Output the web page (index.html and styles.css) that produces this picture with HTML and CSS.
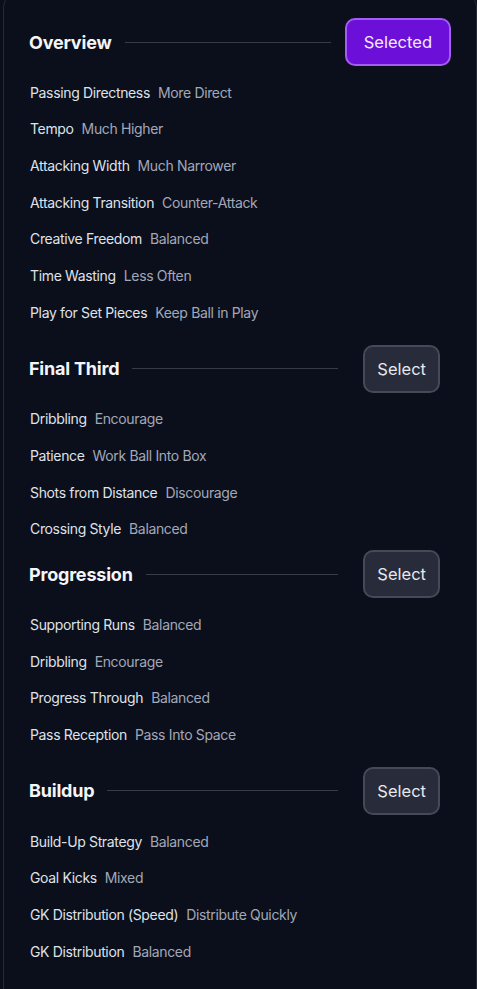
FILE: index.html
```html
<!DOCTYPE html>
<html lang="en">
    <head>
        <meta charset="UTF-8"/>
        <title>Tactics</title>
        <link rel="stylesheet" href="styles.css">
    </head>
    <body>
        <div class="card">
          <section class="group">
            <div class="group-head">
              <h2>Overview</h2>
              <span class="rule"></span>
              <button class="pick selected">Selected</button>
            </div>
            <ul class="settings">
              <li><span class="name">Passing Directness</span><span class="value">More Direct</span></li>
              <li><span class="name">Tempo</span><span class="value">Much Higher</span></li>
              <li><span class="name">Attacking Width</span><span class="value">Much Narrower</span></li>
              <li><span class="name">Attacking Transition</span><span class="value">Counter-Attack</span></li>
              <li><span class="name">Creative Freedom</span><span class="value">Balanced</span></li>
              <li><span class="name">Time Wasting</span><span class="value">Less Often</span></li>
              <li><span class="name">Play for Set Pieces</span><span class="value">Keep Ball in Play</span></li>
            </ul>
          </section>
          <section class="group">
            <div class="group-head">
              <h2>Final Third</h2>
              <span class="rule"></span>
              <button class="pick">Select</button>
            </div>
            <ul class="settings">
              <li><span class="name">Dribbling</span><span class="value">Encourage</span></li>
              <li><span class="name">Patience</span><span class="value">Work Ball Into Box</span></li>
              <li><span class="name">Shots from Distance</span><span class="value">Discourage</span></li>
              <li><span class="name">Crossing Style</span><span class="value">Balanced</span></li>
            </ul>
          </section>
          <section class="group tight">
            <div class="group-head">
              <h2>Progression</h2>
              <span class="rule"></span>
              <button class="pick">Select</button>
            </div>
            <ul class="settings">
              <li><span class="name">Supporting Runs</span><span class="value">Balanced</span></li>
              <li><span class="name">Dribbling</span><span class="value">Encourage</span></li>
              <li><span class="name">Progress Through</span><span class="value">Balanced</span></li>
              <li><span class="name">Pass Reception</span><span class="value">Pass Into Space</span></li>
            </ul>
          </section>
          <section class="group">
            <div class="group-head">
              <h2>Buildup</h2>
              <span class="rule"></span>
              <button class="pick">Select</button>
            </div>
            <ul class="settings">
              <li><span class="name">Build-Up Strategy</span><span class="value">Balanced</span></li>
              <li><span class="name">Goal Kicks</span><span class="value">Mixed</span></li>
              <li><span class="name">GK Distribution (Speed)</span><span class="value">Distribute Quickly</span></li>
              <li><span class="name">GK Distribution</span><span class="value">Balanced</span></li>
            </ul>
          </section>
        </div>
    </body>
</html>
```

FILE: styles.css
```css
html, body {
  background: #0a0e19;
}

body {
  margin: 0;
  padding: 0 0 0 3px;
  font-family: Inter, "Liberation Sans", sans-serif;
  overflow: hidden;
}

.card {
  margin-top: -7px;
  padding: 24px 0 40px 25px;
  min-height: 1040px;
  background: #0b0f1b;
  border: 1px solid #262a36;
  border-radius: 14px;
  box-sizing: border-box;
}

.group + .group {
  margin-top: 14px;
}
.group.tight {
  margin-top: 3px;
}

.group-head {
  display: flex;
  align-items: center;
  height: 48px;
}

h2 {
  margin: 0;
  font-size: 18px;
  font-weight: 700;
  color: #f4f5f8;
  letter-spacing: -0.2px;
}

.rule {
  flex: 1;
  height: 1px;
  margin-left: 13px;
  background: #363b49;
}

.pick {
  font-family: inherit;
  font-size: 16.5px;
  height: 48px;
  padding: 0 12px;
  margin: 0 36px 0 25px;
  border-radius: 10px;
  background: #282b39;
  border: 2px solid #464958;
  color: #e6e8ee;
}

.pick.selected {
  height: 48px;
  padding: 0 17px;
  margin: 0 25px 0 14px;
  background: #6c0fd8;
  border-color: #a35df2;
  color: #f3eaff;
}

.settings {
  list-style: none;
  margin: 8px 0 0;
  padding: 0 0 0 1px;
}

.settings li {
  display: flex;
  align-items: center;
  gap: 8px;
  height: 36.67px;
  font-size: 14px;
  letter-spacing: -0.35px;
}

.name {
  color: #dfe2e9;
}

.value {
  color: #a2a8b8;
}
```
